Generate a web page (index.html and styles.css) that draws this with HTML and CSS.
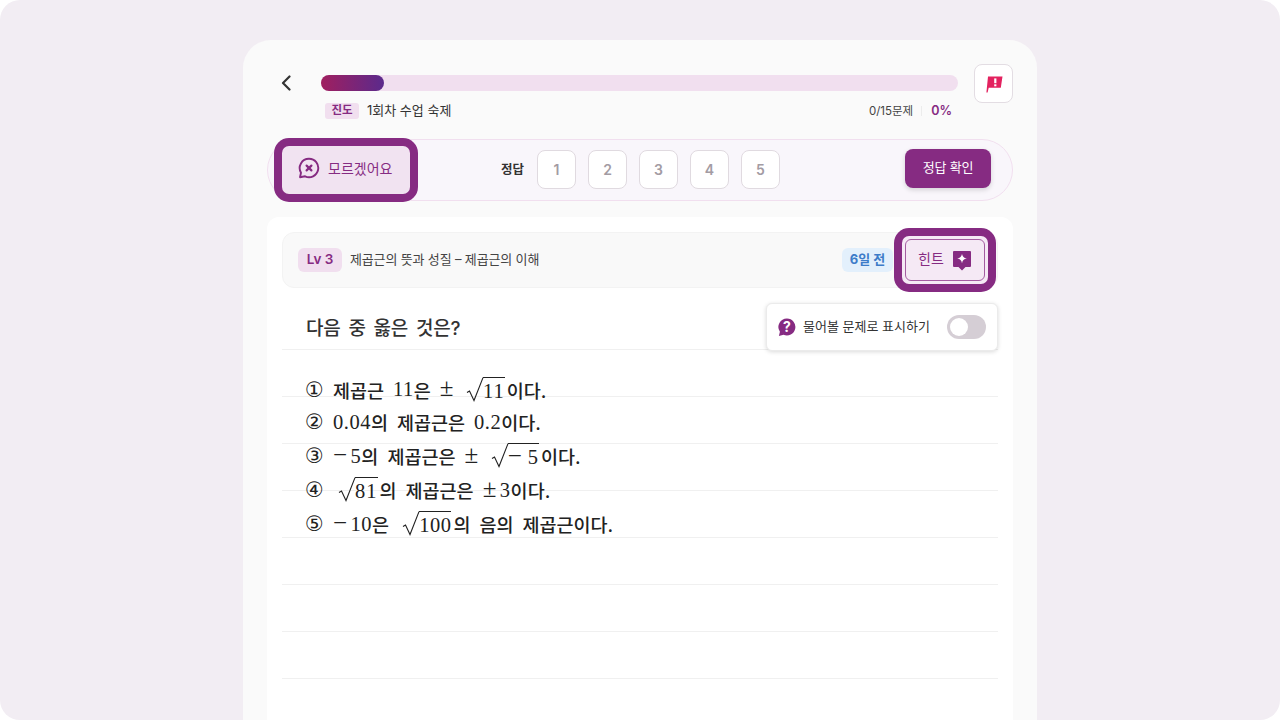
FILE: index.html
```html
<!DOCTYPE html>
<html lang="ko">

<head>
    <meta charset="UTF-8">
    <title>1회차 수업 숙제</title>
    <link rel="stylesheet" href="styles.css">
</head>

<body>
    <div class="frame">
        <main class="panel">
            <div class="top-bar">
                <button class="back-btn" aria-label="뒤로">
                    <svg width="12" height="16" viewBox="0 0 12 16"><path d="M9.500 1.500 3 8l6.500 6.500" fill="none" stroke="#333" stroke-width="2.200" stroke-linecap="round" stroke-linejoin="round"/></svg>
                </button>
                <div class="progress">
                    <div class="track"><div class="fill"></div></div>
                    <div class="meta">
                        <span class="tag-progress">진도</span>
                        <span class="meta-title">1회차 수업 숙제</span>
                        <span class="meta-count">0/15문제</span>
                        <span class="meta-sep"></span>
                        <span class="meta-percent">0%</span>
                    </div>
                </div>
                <button class="flag-btn" aria-label="신고">
                    <svg width="18" height="18" viewBox="0 0 18 18"><path d="M3 1.500h14.500L15.800 12.800H3.700L2.600 17.500H1.400Z" fill="#e3225f"/><rect x="9.200" y="3.400" width="2.200" height="4.800" fill="#fff"/><rect x="9.200" y="9.300" width="2.200" height="2" fill="#fff"/></svg>
                </button>
            </div>

            <div class="answer-bar">
                <button class="dunno-btn">
                    <svg width="22" height="22" viewBox="0 0 22 22"><path d="M11 1.800a9.200 9.200 0 1 1-3.900 17.500L2 20.200l1-4.500A9.200 9.200 0 0 1 11 1.800Z" fill="none" stroke="#862b82" stroke-width="1.900" stroke-linejoin="round"/><path d="m8.600 8.600 4.800 4.800m0-4.800-4.800 4.800" stroke="#862b82" stroke-width="2.200" stroke-linecap="round"/></svg>
                    모르겠어요
                </button>
                <div class="answers">
                    <span class="answers-label">정답</span>
                    <button class="num-btn">1</button>
                    <button class="num-btn">2</button>
                    <button class="num-btn">3</button>
                    <button class="num-btn">4</button>
                    <button class="num-btn">5</button>
                </div>
                <button class="confirm-btn">정답 확인</button>
            </div>

            <section class="card">
                <div class="info-bar">
                    <span class="tag-level">Lv 3</span>
                    <span class="info-title nudge">제곱근의 뜻과 성질 – 제곱근의 이해</span>
                    <span class="tag-date">6일 전</span>
                    <button class="hint-btn">
                        <span class="hint-inner">
                            <span class="nudge">힌트</span>
                            <svg width="20" height="21" viewBox="0 0 20 21"><path d="M2 1h16a1 1 0 0 1 1 1v14a1 1 0 0 1-1 1h-4.500L10 20.500 6.500 17H2a1 1 0 0 1-1-1V2a1 1 0 0 1 1-1Z" fill="#862b82"/><path d="M10 3.800c.6 3 1.700 4.100 4.800 4.700-3.100.6-4.200 1.700-4.800 4.700-.6-3-1.700-4.100-4.800-4.700 3.100-.6 4.200-1.700 4.800-4.700Z" fill="#fff"/></svg>
                        </span>
                    </button>
                </div>

                <div class="paper">
                    <div class="question-head">
                        <h2 class="question-title">다음 중 옳은 것은?</h2>
                        <label class="mark-box">
                            <svg width="18" height="19" viewBox="0 0 18 19"><path d="M9 .5a8.500 8.500 0 1 1-3.500 16.300L.9 18l1-4.200A8.500 8.500 0 0 1 9 .5Z" fill="#862b82"/><text x="9" y="13.800" text-anchor="middle" class="mark-q">?</text></svg>
                            <span class="nudge">물어볼 문제로 표시하기</span>
                            <span class="switch"><span class="knob"></span></span>
                        </label>
                    </div>

                    <ol class="choices">
                        <li><span class="circled">①</span><b>제곱근</b><span class="math gap">11</span><b>은</b><span class="math gap"><span class="op">±</span></span><span class="root gap"><svg class="radical" width="18" height="26" viewBox="0 0 18 26"><path d="M1 15.500 3.500 14l4.500 9.500L17 .6" fill="none" stroke="#222" stroke-width="1.100"/></svg><span class="radicand">11</span></span><b class="tight">이다.</b></li>
                        <li><span class="circled">②</span><span class="math">0.04</span><b>의</b><b class="gap">제곱근은</b><span class="math gap">0.2</span><b>이다.</b></li>
                        <li><span class="circled">③</span><span class="math"><span class="op">−</span>5</span><b>의</b><b class="gap">제곱근은</b><span class="math gap"><span class="op">±</span></span><span class="root gap"><svg class="radical" width="18" height="26" viewBox="0 0 18 26"><path d="M1 15.500 3.500 14l4.500 9.500L17 .6" fill="none" stroke="#222" stroke-width="1.100"/></svg><span class="radicand"><span class="op">−</span>5</span></span><b class="tight">이다.</b></li>
                        <li><span class="circled">④</span><span class="root root-first"><svg class="radical" width="18" height="26" viewBox="0 0 18 26"><path d="M1 15.500 3.500 14l4.500 9.500L17 .6" fill="none" stroke="#222" stroke-width="1.100"/></svg><span class="radicand">81</span></span><b class="tight">의</b><b class="gap">제곱근은</b><span class="math gap"><span class="op">±</span>3</span><b>이다.</b></li>
                        <li><span class="circled">⑤</span><span class="math"><span class="op">−</span>10</span><b>은</b><span class="root root-wide"><svg class="radical" width="18" height="26" viewBox="0 0 18 26"><path d="M1 15.500 3.500 14l4.500 9.500L17 .6" fill="none" stroke="#222" stroke-width="1.100"/></svg><span class="radicand">100</span></span><b class="tight">의</b><b class="gap">음의</b><b class="gap">제곱근이다.</b></li>
                    </ol>
                </div>
            </section>
        </main>
    </div>
</body>

</html>
```

FILE: styles.css
```css
* {
    box-sizing: border-box;
}

html,
body {
    height: 720px;
    margin: 0;
    overflow: hidden;
}

body {
    background-color: #fff;
    color: #333;
    font-family: Inter, "Noto Sans CJK KR", sans-serif;
}

button {
    font-family: inherit;
    padding: 0;
    border: none;
    background: none;
}

/* 한글이 Inter 기준선에서 살짝 아래로 내려가는 것 보정 */
.nudge {
    padding-bottom: 4px;
}

.frame {
    height: 720px;
    padding-top: 40px;
    overflow: hidden;
    background-color: #f2edf3;
    border-radius: 20px;
}

.panel {
    width: 794px;
    height: 680px;
    margin: 0 auto;
    padding: 24px 24px 0;
    overflow: hidden;
    background-color: #fafafa;
    border-radius: 28px 28px 0 0;
}

/* 상단 진도 */
.top-bar {
    display: flex;
    align-items: flex-start;
}

.back-btn {
    display: flex;
    width: 54px;
    height: 37px;
    padding-left: 13px;
    align-items: center;
}

.progress {
    flex: 1;
}

.track {
    height: 16px;
    margin-top: 11px;
    background-color: #f1dfef;
    border-radius: 8px;
}

.fill {
    width: 63px;
    height: 16px;
    background: linear-gradient(90deg, #a01f5f, #5b2a8c);
    border-radius: 8px;
}

.meta {
    display: flex;
    align-items: center;
    height: 16px;
    margin-top: 12px;
    padding: 0 6px 0 4px;
    font-size: 13px;
}

.tag-progress {
    width: 34px;
    height: 16px;
    margin-right: 8px;
    background-color: #f1dfef;
    border-radius: 3px;
    color: #862b82;
    font-size: 11.500px;
    font-weight: 700;
    line-height: 15px;
    text-align: center;
}

.meta-title {
    padding-bottom: 4px;
    color: #333;
}

.meta-count {
    margin-left: auto;
    padding-bottom: 2px;
    font-size: 11.500px;
    color: #444;
}

.meta-sep {
    width: 1px;
    height: 10px;
    margin: 0 9px 0 8px;
    background-color: #ececec;
}

.meta-percent {
    padding-bottom: 2px;
    color: #862b82;
    font-size: 12.500px;
    font-weight: 600;
}

.flag-btn {
    display: flex;
    width: 39px;
    height: 39px;
    margin-left: 16px;
    align-items: center;
    justify-content: center;
    background-color: #fff;
    border: 1px solid #e3dde3;
    border-radius: 8px;
}

/* 정답 입력 */
.answer-bar {
    display: flex;
    align-items: center;
    height: 62px;
    margin-top: 20px;
    padding: 0 21px 0 14px;
    background-color: #f9f6fb;
    border: 1px solid #f1dfef;
    border-radius: 31px;
}

.dunno-btn {
    display: flex;
    width: 128px;
    height: 48px;
    padding: 0 0 4px 16px;
    gap: 8px;
    align-items: center;
    background-color: #f1e3f1;
    border-radius: 7px;
    box-shadow: 0 0 0 8px #862b82;
    color: #862b82;
    font-size: 14px;
}

.answers {
    display: flex;
    align-items: center;
    gap: 12px;
    margin: -2px 0 0 91px;
}

.answers-label {
    margin-right: 1px;
    padding-bottom: 2px;
    font-size: 12.500px;
    font-weight: 700;
}

.num-btn {
    width: 39px;
    height: 39px;
    background-color: #fff;
    border: 1px solid #e0dae0;
    border-radius: 8px;
    color: #a39ba3;
    font-size: 14px;
    font-weight: 600;
}

.confirm-btn {
    width: 86px;
    height: 39px;
    margin: -4px 0 0 auto;
    padding-bottom: 3px;
    background-color: #862b82;
    border-radius: 8px;
    box-shadow: 0 2px 5px rgba(0, 0, 0, 0.15);
    color: #fff;
    font-size: 13px;
    letter-spacing: -0.2px;
}

/* 문제 카드 */
.card {
    height: 520px;
    margin-top: 16px;
    padding: 15px;
    background-color: #fff;
    border-radius: 12px;
}

.info-bar {
    display: flex;
    align-items: center;
    height: 56px;
    padding: 0 9px 0 15px;
    background-color: #f9f9f9;
    border: 1px solid #f3f3f3;
    border-radius: 12px;
}

.tag-level {
    width: 44px;
    height: 24px;
    margin-right: 8px;
    background-color: #f1dfef;
    border-radius: 6px;
    color: #862b82;
    font-size: 13.500px;
    font-weight: 600;
    line-height: 23px;
    text-align: center;
}

.info-title {
    color: #444;
    font-size: 13px;
    letter-spacing: -0.15px;
}

.tag-date {
    width: 51px;
    height: 24px;
    margin-left: auto;
    background-color: #e3f0fc;
    border-radius: 6px;
    color: #3d7cc9;
    font-size: 13px;
    font-weight: 700;
    line-height: 23px;
    text-align: center;
}

.hint-btn {
    width: 86px;
    height: 48px;
    margin-left: 9px;
    padding: 3px;
    background-color: #f5e9f5;
    border-radius: 7px;
    box-shadow: 0 0 0 8px #862b82;
}

.hint-inner {
    display: flex;
    height: 42px;
    padding: 0 12px;
    align-items: center;
    justify-content: space-between;
    background-color: #f5e9f5;
    border: 1px solid #a45ca1;
    border-radius: 6px;
    color: #862b82;
    font-size: 14px;
}

.paper {
    height: 440px;
    margin-top: 15px;
    background-image: linear-gradient(to bottom, transparent 46px, #f0f0f0 46px);
    background-size: 100% 47px;
}

.question-head {
    display: flex;
    align-items: flex-start;
    justify-content: space-between;
    height: 68px;
    padding-left: 24px;
}

.question-title {
    margin: 13px 0 0;
    color: #333;
    font-size: 19px;
    font-weight: 500;
    letter-spacing: -0.2px;
    line-height: 26px;
    word-spacing: 3px;
}

.mark-box {
    display: flex;
    width: 232px;
    height: 48px;
    padding: 0 11px;
    align-items: center;
    gap: 7px;
    background-color: #fff;
    border: 1px solid #ebebeb;
    border-radius: 6px;
    box-shadow: 0 1px 4px rgba(0, 0, 0, 0.15);
    font-size: 13px;
}

.mark-q {
    fill: #fff;
    font-size: 14px;
    font-weight: 700;
}

.switch {
    width: 39px;
    height: 24px;
    margin-left: auto;
    padding: 3px;
    background-color: #d5ced5;
    border-radius: 12px;
}

.knob {
    display: block;
    width: 18px;
    height: 18px;
    background-color: #fff;
    border-radius: 50%;
}

/* 보기 */
.choices {
    margin: 0;
    padding: 0 0 0 24px;
    list-style: none;
    color: #222;
    font-size: 18.500px;
}

.choices li {
    display: flex;
    height: 34px;
    align-items: center;
}

.choices li:first-child {
    padding-top: 3px;
}

.choices b {
    font-weight: 500;
}

.circled {
    width: 27px;
    margin-left: -1px;
    margin-right: 1px;
    font-family: "DejaVu Sans", sans-serif;
    font-size: 21px;
    line-height: 26px;
}

.math {
    font-family: "Liberation Serif", serif;
    font-size: 20.500px;
    letter-spacing: 0.5px;
}

.op {
    margin-right: 3px;
    font-size: 25px;
    line-height: 0;
}

.gap {
    margin-left: 9px;
}

.tight {
    margin-left: 2px;
}

.root {
    display: flex;
    align-items: flex-start;
    height: 28px;
    margin-top: 2px;
}

.root-first {
    margin-left: 5px;
}

.root-wide {
    margin-left: 13px;
}

.root-wide .radicand {
    letter-spacing: 0.5px;
}

.radical {
    flex: none;
    margin-right: -1px;
}

.radicand {
    border-top: 1px solid #222;
    font-family: "Liberation Serif", serif;
    font-size: 20.500px;
    letter-spacing: 1px;
    line-height: 26px;
}

.radicand .op {
    margin-right: 5px;
}
```
